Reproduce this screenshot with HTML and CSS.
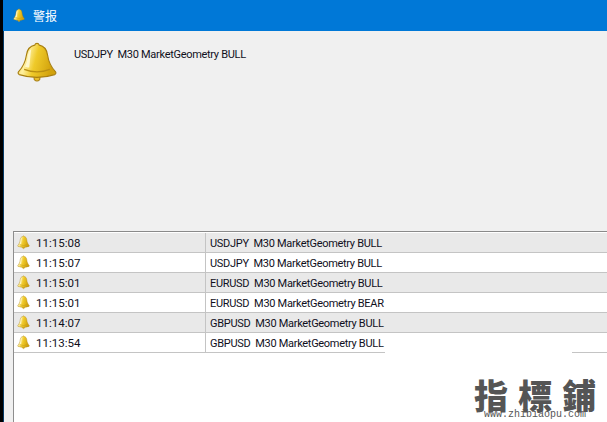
FILE: index.html
```html
<!DOCTYPE html>
<html lang="zh">
<head>
<meta charset="utf-8">
<title>警报</title>
<link rel="stylesheet" href="styles.css">
</head>
<body>
<svg class="defs" width="0" height="0" aria-hidden="true">
  <defs>
    <linearGradient id="bellFill" x1="0" y1="0" x2="1" y2="0.25">
      <stop offset="0" stop-color="#eec82c"/>
      <stop offset="0.3" stop-color="#fff0a0"/>
      <stop offset="0.55" stop-color="#efca2a"/>
      <stop offset="1" stop-color="#d2a20c"/>
    </linearGradient>
    <symbol id="bell" viewBox="0 0 40 40" preserveAspectRatio="none">
      <path d="M17 31.5h6l-0.4 3.600q-2.600 2.600-5.200 0z" fill="#e9bd2a" stroke="#a87f10" stroke-width="1"/>
      <path d="M20 2.200q1.600 0 2.200 1.600c5 .9 7 3.800 7.800 8.700 1 6.400 2.700 10.500 7.500 15.300q1.200 1.600-.6 2.700-16.900 5.200-33.800 0-1.800-1.100-.6-2.700c4.800-4.800 6.500-8.900 7.500-15.300.8-4.900 2.800-7.800 7.800-8.700q.6-1.600 2.200-1.600z" fill="url(#bellFill)" stroke="#a87f10" stroke-width="1.100"/>
      <path d="M7.800 25.800q12.200 4.500 24.400 0" fill="none" stroke="#b98f12" stroke-width="1.100"/>
      <path d="M14.500 7.500c-2.500 1.500-3 4.500-3.500 8-.4 2.800-1.200 5.500-2.400 7.800 2 .5 3.200.8 4 .9 .8-5.500 1-11.500 1.900-16.700z" fill="#fffbe0" opacity=".8"/>
    </symbol>
  </defs>
</svg>
<div class="desktop-edge"></div>
<main class="window">
  <header class="titlebar">
    <svg class="bell-title"><use href="#bell"/></svg>
    <span class="title">警报</span>
  </header>
  <section class="message">
    <svg class="bell-large"><use href="#bell"/></svg>
    <p class="message-text">USDJPY  M30 MarketGeometry BULL</p>
  </section>
  <section class="log">
    <div class="row alt"><div class="cell-time"><svg class="bell-small"><use href="#bell"/></svg><span>11:15:08</span></div><div class="cell-text">USDJPY  M30 MarketGeometry BULL</div></div>
    <div class="row"><div class="cell-time"><svg class="bell-small"><use href="#bell"/></svg><span>11:15:07</span></div><div class="cell-text">USDJPY  M30 MarketGeometry BULL</div></div>
    <div class="row alt"><div class="cell-time"><svg class="bell-small"><use href="#bell"/></svg><span>11:15:01</span></div><div class="cell-text">EURUSD  M30 MarketGeometry BULL</div></div>
    <div class="row"><div class="cell-time"><svg class="bell-small"><use href="#bell"/></svg><span>11:15:01</span></div><div class="cell-text">EURUSD  M30 MarketGeometry BEAR</div></div>
    <div class="row alt"><div class="cell-time"><svg class="bell-small"><use href="#bell"/></svg><span>11:14:07</span></div><div class="cell-text">GBPUSD  M30 MarketGeometry BULL</div></div>
    <div class="row"><div class="cell-time"><svg class="bell-small"><use href="#bell"/></svg><span>11:13:54</span></div><div class="cell-text">GBPUSD  M30 MarketGeometry BULL</div></div>
  </section>
</main>
<div class="mask"></div>
<div class="watermark">
  <div class="wm-cjk">指標鋪</div>
  <div class="wm-url">www.zhibiaopu.com</div>
</div>
</body>
</html>
```
FILE: styles.css
```css
* { box-sizing: border-box; }
html, body { height: 100%; }
body {
  margin: 0;
  display: flex;
  overflow: hidden;
  background: #fff;
  font-family: Roboto, "Liberation Sans", sans-serif;
  font-size: 11px;
  color: #10101c;
}
.defs { position: absolute; }
.desktop-edge {
  flex: 0 0 4px;
  background: linear-gradient(90deg, #000 0 3px, #063a66 3px);
}
.window {
  flex: 1;
  display: flex;
  flex-direction: column;
  background: #f0f0f0;
  min-width: 0;
}
.titlebar {
  flex: 0 0 31px;
  display: flex;
  align-items: center;
  gap: 8px;
  padding: 0 0 1px 10px;
  background: #0078d7;
  color: #fff;
  margin-left: -1px;
}
.bell-title { width: 12px; height: 15px; }
.title { font: 12px "Noto Sans CJK SC", sans-serif; }
.message {
  flex: 0 0 200px;
  display: flex;
  align-items: flex-start;
  padding: 10px 0 0 12px;
  gap: 16px;
}
.bell-large { width: 42px; height: 44px; }
.message-text { margin: 7px 0 0; white-space: pre; letter-spacing: -0.3px; }
.log {
  flex: 1;
  margin-left: 9px;
  padding-top: 1px;
  background: #fff;
  border-top: 1px solid #8a8a8a;
  border-left: 1px solid #8e8e8e;
}
.row {
  display: flex;
  height: 20px;
  background: #fff;
  border-bottom: 1px solid #c4c4c4;
}
.row.alt { background: #e9e9e9; }
.cell-time {
  flex: 0 0 192px;
  display: flex;
  align-items: center;
  gap: 6px;
  padding-left: 3px;
  border-right: 1px solid #c4c4c4;
  font-size: 11.500px;
}
.bell-small { width: 13px; height: 15px; }
.cell-text {
  flex: 1;
  padding: 4px 0 0 4px;
  white-space: pre;
  letter-spacing: -0.3px;
}
.mask {
  position: absolute;
  left: 385px;
  top: 351px;
  width: 187px;
  height: 4px;
  background: #fff;
}
.watermark {
  position: absolute;
  left: 474px;
  top: 372px;
  width: 128px;
  color: #555;
}
.wm-cjk {
  font: 900 34px/46px "Noto Sans CJK TC", sans-serif;
  letter-spacing: 10px;
  white-space: nowrap;
  height: 38px;
}
.wm-url {
  font: 10px/10px "Liberation Mono", monospace;
  margin-left: 10px;
  white-space: nowrap;
}
```
